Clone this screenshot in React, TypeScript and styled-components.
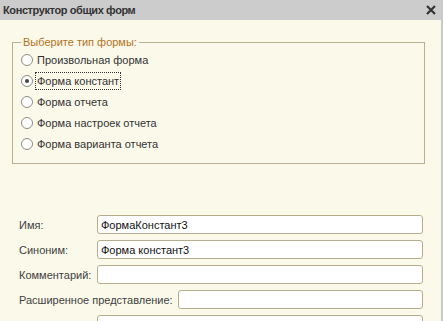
import { FC } from "react";
import styled, { createGlobalStyle } from "styled-components";

const GlobalStyle = createGlobalStyle`
	html, body {
		margin: 0;
		padding: 0;
		background: #fbf9ea;
	}
	body {
		font-family: "Liberation Sans", Arial, sans-serif;
		font-size: 11px;
	}
`;

const Window = styled.div`
	width: 443px;
	height: 321px;
	box-sizing: border-box;
	display: flex;
	flex-direction: column;
	background: #fbf9ea;
	border-right: 2px solid #c9c9c9;
	overflow: hidden;
`;

const TitleBar = styled.div`
	height: 20px;
	flex-shrink: 0;
	display: flex;
	align-items: center;
	justify-content: space-between;
	padding: 0 3px 0 3px;
	background: #cccccc;
	color: #333333;
	font-size: 11px;
	font-weight: 700;
	letter-spacing: -0.4px;
`;

const CloseButton = styled.div`
	width: 12px;
	height: 12px;
	display: flex;
	align-items: center;
	justify-content: center;
	margin-right: 1px;
`;

const Body = styled.div`
	display: flex;
	flex-direction: column;
	padding: 15px 16px 0 12px;
`;

const Group = styled.fieldset`
	margin: 0;
	padding: 0 8px 9px 8px;
	border: 1px solid #b8b293;
	display: flex;
	flex-direction: column;
`;

const Legend = styled.legend`
	padding: 0 2px;
	color: #b5721c;
	font-size: 11px;
	line-height: 14px;
`;

const RadioRow = styled.div`
	height: 21px;
	display: flex;
	align-items: center;
	gap: 2px;
	color: #333333;
`;

const RadioCircle = styled.span<{ $checked: boolean }>`
	width: 12px;
	height: 12px;
	box-sizing: border-box;
	border: 1px solid #8c8c84;
	border-radius: 50%;
	background: #ffffff;
	display: flex;
	align-items: center;
	justify-content: center;

	&::after {
		content: "";
		width: 4px;
		height: 4px;
		border-radius: 50%;
		background: ${(p) => (p.$checked ? "#444444" : "transparent")};
	}
`;

const RadioLabel = styled.span<{ $focused: boolean }>`
	padding: 1px 1px;
	border: 1px dotted ${(p) => (p.$focused ? "#333333" : "transparent")};
	line-height: 14px;
`;

const Fields = styled.div`
	display: flex;
	flex-direction: column;
	gap: 6px;
	padding: 51px 18px 0 19px;
`;

const FieldRow = styled.div`
	display: flex;
	align-items: center;
	height: 19px;
	flex-shrink: 0;
`;

const FieldLabel = styled.span`
	min-width: 78px;
	padding-right: 5px;
	box-sizing: border-box;
	color: #3f3f3f;
	white-space: nowrap;
`;

const Input = styled.div`
	flex: 1;
	height: 19px;
	box-sizing: border-box;
	border: 1px solid #b5ae8c;
	border-radius: 3px;
	background: #ffffff;
	padding: 0 3px;
	display: flex;
	align-items: center;
	color: #111111;
`;

const options = [
	"Произвольная форма",
	"Форма констант",
	"Форма отчета",
	"Форма настроек отчета",
	"Форма варианта отчета",
];

const fields = [
	{ label: "Имя:", value: "ФормаКонстант3" },
	{ label: "Синоним:", value: "Форма констант3" },
	{ label: "Комментарий:", value: "" },
	{ label: "Расширенное представление:", value: "" },
	{ label: "Подсказка:", value: "" },
];

const App: FC = () => {
	const selected = 1;

	return (
		<>
			<GlobalStyle />
			<Window>
				<TitleBar>
					<span>Конструктор общих форм</span>
					<CloseButton>
						<svg width="10" height="10" viewBox="0 0 10 10">
							<path d="M1 1L9 9M9 1L1 9" stroke="#333" strokeWidth="2.2" />
						</svg>
					</CloseButton>
				</TitleBar>
				<Body>
					<Group>
						<Legend>Выберите тип формы:</Legend>
						{options.map((option, i) => (
							<RadioRow key={option}>
								<RadioCircle $checked={i === selected} />
								<RadioLabel $focused={i === selected}>{option}</RadioLabel>
							</RadioRow>
						))}
					</Group>
				</Body>
				<Fields>
					{fields.map((field) => (
						<FieldRow key={field.label}>
							<FieldLabel>{field.label}</FieldLabel>
							<Input>{field.value}</Input>
						</FieldRow>
					))}
				</Fields>
			</Window>
		</>
	);
};

export default App;
